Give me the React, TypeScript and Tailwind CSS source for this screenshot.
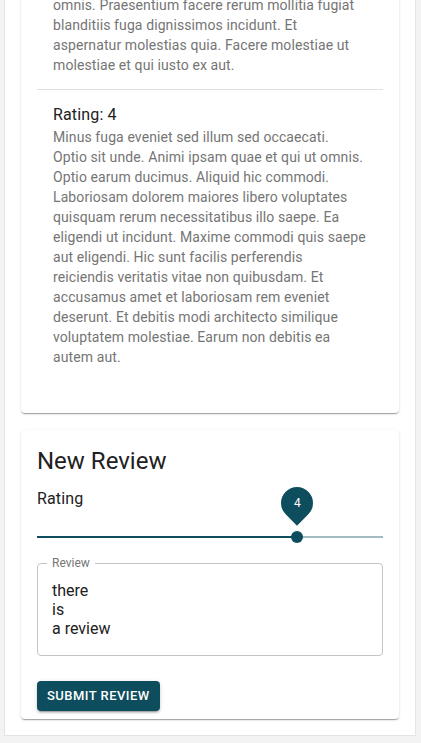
const earlier = [
  'omnis. Praesentium facere rerum mollitia fugiat',
  'blanditiis fuga dignissimos incidunt. Et',
  'aspernatur molestias quia. Facere molestiae ut',
  'molestiae et qui iusto ex aut.',
];

const review = [
  'Minus fuga eveniet sed illum sed occaecati.',
  'Optio sit unde. Animi ipsam quae et qui ut omnis.',
  'Optio earum ducimus. Aliquid hic commodi.',
  'Laboriosam dolorem maiores libero voluptates',
  'quisquam rerum necessitatibus illo saepe. Ea',
  'eligendi ut incidunt. Maxime commodi quis saepe',
  'aut eligendi. Hic sunt facilis perferendis',
  'reiciendis veritatis vitae non quibusdam. Et',
  'accusamus amet et laboriosam rem eveniet',
  'deserunt. Et debitis modi architecto similique',
  'voluptatem molestiae. Earum non debitis ea',
  'autem aut.',
];

const cardCls =
  'bg-white rounded-[4px] shadow-[0px_2px_1px_-1px_rgba(0,0,0,0.2),0px_1px_1px_0px_rgba(0,0,0,0.14),0px_1px_3px_0px_rgba(0,0,0,0.12)]';

function Lines({ lines }: { lines: string[] }) {
  return (
    <p className="text-[14px] leading-[20px] tracking-[0.1px] text-[#757575]">
      {lines.map((l) => (
        <span key={l} className="block whitespace-nowrap">
          {l}
        </span>
      ))}
    </p>
  );
}

function RatingSlider({ value }: { value: number }) {
  const pct = ((value - 1) / 4) * 100;
  return (
    <div className="relative h-[20px] mt-[16px]">
      <div className="absolute left-0 right-0 top-[9px] h-[2px] bg-[#0e4d5e] opacity-[0.38]" />
      <div className="absolute left-0 top-[9px] h-[2px] bg-[#0e4d5e]" style={{ width: `${pct}%` }} />
      <div
        className="absolute top-[4px] w-[12px] h-[12px] -ml-[6px] rounded-full bg-[#0e4d5e]"
        style={{ left: `${pct}%` }}
      />
      <div className="absolute top-[-40px] -ml-[16px] w-[32px] h-[32px]" style={{ left: `${pct}%` }}>
        <div className="w-[32px] h-[32px] rotate-[-45deg] rounded-[50%_50%_50%_0] bg-[#0e4d5e] flex items-center justify-center">
          <span className="rotate-45 text-white text-[12px] leading-none">{value}</span>
        </div>
      </div>
    </div>
  );
}

export default function App() {
  return (
    <div className="min-h-[743px] bg-[#f3f3f3] font-['Roboto','Liberation_Sans',sans-serif] overflow-hidden">
      <div className="ml-[4px] w-[412px] bg-white border border-[#e4e4e4] border-t-0 px-[16px] pb-[16px] mt-[-22px]">
        <div className={cardCls + ' px-[16px] pb-[46px]'}>
          <div className="px-[16px] pt-[17px] pb-[14px] border-b border-[#e0e0e0]">
            <Lines lines={earlier} />
          </div>
          <div className="px-[16px] pt-[13px]">
            <p className="text-[16px] leading-[24px] tracking-[0.15px] text-[#212121]">Rating: 4</p>
            <Lines lines={review} />
          </div>
        </div>

        <div className={cardCls + ' mt-[17px] px-[16px] pt-[15px] pb-[8px]'}>
          <h2 className="text-[24px] leading-[32px] text-[#212121]">New Review</h2>
          <p className="mt-[10px] text-[16px] leading-[24px] tracking-[0.15px] text-[#212121]">Rating</p>
          <RatingSlider value={4} />
          <div className="relative mt-[16px] border border-[#c4c4c4] rounded-[4px] px-[14px] py-[17px]">
            <span className="absolute left-[9px] top-[-8px] px-[5px] bg-white text-[12px] leading-[14px] text-[#757575]">
              Review
            </span>
            <div className="text-[16px] leading-[19px] text-[#212121]">
              <div>there</div>
              <div>is</div>
              <div>a review</div>
            </div>
          </div>
          <button className="mt-[25px] h-[30px] px-[10px] rounded-[4px] bg-[#0e4d5e] text-white text-[13px] font-medium tracking-[0.46px] uppercase shadow-[0px_3px_1px_-2px_rgba(0,0,0,0.2),0px_2px_2px_0px_rgba(0,0,0,0.14),0px_1px_5px_0px_rgba(0,0,0,0.12)]">
            Submit Review
          </button>
        </div>
      </div>
    </div>
  );
}
